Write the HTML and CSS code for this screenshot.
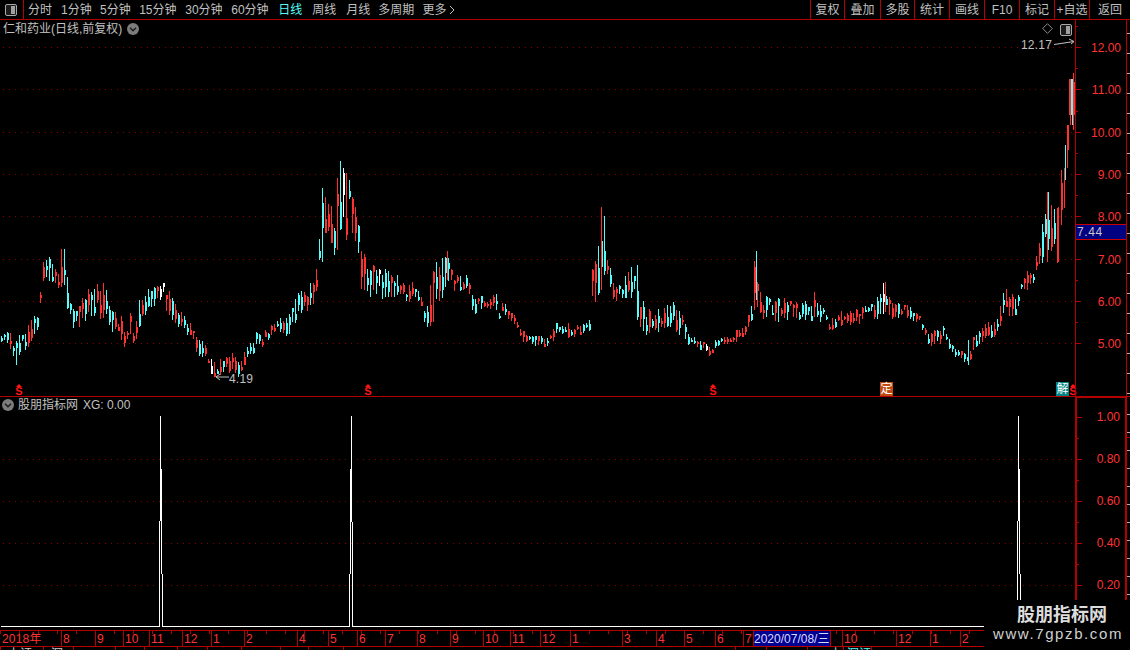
FILE: index.html
```html
<!DOCTYPE html>
<html lang="zh-CN">
<head>
<meta charset="utf-8">
<title>仁和药业</title>
<link rel="stylesheet" href="styles.css">
</head>
<body>
<div class="page">
  <header class="toolbar">
    <div class="tb-icon">
      <svg class="panel-icon" viewBox="0 0 12 12"><rect x="0.5" y="0.5" width="11" height="11" rx="1.5" class="pi-frame"/><rect x="6" y="2" width="4" height="8" class="pi-fill"/></svg>
    </div>
    <nav class="periods">
      <span class="p">分时</span><span class="p p1">1分钟</span><span class="p p1">5分钟</span><span class="p p2">15分钟</span><span class="p p2">30分钟</span><span class="p p3">60分钟</span><span class="p p5 active">日线</span><span class="p p5">周线</span><span class="p p4">月线</span><span class="p p4">多周期</span><span class="p">更多 <svg class="more" viewBox="0 0 6 10"><path d="M1 1l4 4-4 4"/></svg></span>
    </nav>
    <div class="actions">
      <span>复权</span><span>叠加</span><span>多股</span><span>统计</span><span>画线</span><span>F10</span><span>标记</span><span>+自选</span><span>返回</span>
    </div>
  </header>

  <section class="pane pane-main">
    <div class="plot">
      <svg id="kline" class="plot-svg" viewBox="0 20 1075 376"></svg>
      <div class="pane-title">
        <span>仁和药业(日线,前复权)</span>
        <svg class="chev" viewBox="0 0 12 12"><circle cx="6" cy="6" r="6"/><path d="M3 4.8l3 3 3-3"/></svg>
      </div>
      <svg class="diamond" viewBox="0 0 11 11"><path d="M5.5 0.7l4.8 4.8-4.8 4.8-4.8-4.8z"/></svg>
      <svg class="panel-icon corner" viewBox="0 0 12 12"><rect x="0.5" y="0.5" width="11" height="11" rx="1.5" class="pi-frame"/><rect x="6" y="2" width="4" height="8" class="pi-fill"/></svg>
      <span class="note hi">12.17</span>
      <svg class="arrow arrow-hi" viewBox="0 0 22 8"><path d="M1 6.5l20-3M16 1l5 2.5-3 2.5"/></svg>
      <svg class="arrow arrow-lo" viewBox="0 0 14 8"><path d="M1 4h13M5 1L1 4l4 3"/></svg>
      <span class="note lo">4.19</span>
      <i class="mark s1">S</i><i class="mark s2">S</i><i class="mark s3">S</i><i class="mark s4">S</i>
      <b class="flag flag-ding">定</b>
      <b class="flag flag-jie">解</b>
    </div>
    <div class="axis">
      <ul class="ticks ticks-main">
        <li>12.00</li><li>11.00</li><li>10.00</li><li>9.00</li><li>8.00</li><li>7.00</li><li>6.00</li><li>5.00</li>
      </ul>
      <div class="price-tag">7.44</div>
    </div>
    <div class="edge"></div>
  </section>

  <section class="pane pane-sub">
    <div class="plot">
      <svg id="signal" class="plot-svg" viewBox="0 397 1075 233"></svg>
      <div class="pane-title sub-title">
        <svg class="chev" viewBox="0 0 12 12"><circle cx="6" cy="6" r="6"/><path d="M3 4.8l3 3 3-3"/></svg>
        <span>股朋指标网</span><span class="xg">XG: 0.00</span>
      </div>
    </div>
    <div class="axis axis-sub">
      <ul class="ticks ticks-sub">
        <li>1.00</li><li>0.80</li><li>0.60</li><li>0.40</li><li>0.20</li>
      </ul>
    </div>
    <div class="edge edge-sub"></div>
  </section>

  <footer class="timeline">
    <span>2018年</span><span>8</span><span>9</span><span>10</span><span>11</span><span>12</span><span>1</span><span>2</span><span>4</span><span>5</span><span>6</span><span>7</span><span>8</span><span>9</span><span>10</span><span>11</span><span>12</span><span>1</span><span>3</span><span>4</span><span>5</span><span>6</span><span>7</span><span class="cursor-date">2020/07/08/三</span><span></span><span>10</span><span>12</span><span>1</span><span>2</span>
  </footer>
  <div class="status">
    <span>上证</span><span>深</span><span></span><span></span><span></span><span></span><span></span><span></span><span></span><span></span><span></span><span></span><span></span><span class="status-w">上</span><span class="status-c">深证</span><span></span>
  </div>

  <div class="watermark">
    <strong>股朋指标网</strong>
    <span>www.7gpzb.com</span>
  </div>
</div>
<script src="chart.js"></script>
</body>
</html>
```

FILE: styles.css
```css
* { box-sizing: border-box; }
html, body { margin: 0; padding: 0; background: #000; }
body {
  width: 1130px;
  height: 650px;
  overflow: hidden;
  color: #c0c0c0;
  font-family: "Liberation Sans", "Noto Sans CJK SC", sans-serif;
  font-size: 12px;
  line-height: 1;
}
ul { list-style: none; margin: 0; padding: 0; }
i, b { font-style: normal; font-weight: normal; }

.page { position: relative; width: 1130px; height: 650px; display: flex; flex-direction: column; }

/* toolbar */
.toolbar { height: 20px; flex: none; display: flex; align-items: stretch; border-bottom: 1px solid #b40000; }
.tb-icon { width: 24px; flex: none; border-right: 1px solid #b40000; display: flex; align-items: center; justify-content: center; padding-right: 1px; }
.panel-icon { width: 12px; height: 12px; display: block; }
.pi-frame { fill: #1c1c1c; stroke: #a8a8a8; stroke-width: 1; }
.pi-fill { fill: #a0a0a0; }
.periods { flex: 1; display: flex; align-items: center; padding-left: 4px; white-space: nowrap; }
.p { display: flex; align-items: center; margin-right: 9px; }
.p1 { margin-right: 8.4px; }
.p2 { margin-right: 8.7px; }
.p3 { margin-right: 9.7px; }
.p4 { margin-right: 8px; }
.p5 { margin-right: 10px; }
.active { color: #54fcfc; }
.more { width: 6px; height: 10px; margin-left: 3px; }
.more path { fill: none; stroke: #c0c0c0; stroke-width: 1; }
.actions { display: grid; grid-template-columns: 34px 36px 34px 35px 35px 35px 35px 35px 41px; flex: none; width: 320px; }
.actions span { border-left: 1px solid #b40000; display: flex; align-items: center; justify-content: center; white-space: nowrap; }

/* panes */
.pane { display: flex; flex: none; }
.pane-main { height: 377px; border-bottom: 1px solid #b40000; }
.pane-sub { height: 233px; }
.plot { position: relative; width: 1075px; flex: none; }
.plot-svg { position: absolute; left: 0; top: 0; width: 100%; height: 100%; display: block; }

.pane-title { position: absolute; left: 3px; top: 2px; display: flex; align-items: center; gap: 5px; height: 14px; white-space: nowrap; }
.sub-title { left: 2px; top: 1px; gap: 4px; }
.xg { margin-left: 1px; }
.chev { width: 12px; height: 12px; flex: none; }
.chev circle { fill: #7c7c7c; }
.chev path { fill: none; stroke: #1a1a1a; stroke-width: 1.4; }

.diamond { position: absolute; left: 1042px; top: 3px; width: 11px; height: 11px; }
.diamond path { fill: none; stroke: #8c8c8c; stroke-width: 1; }
.corner { position: absolute; left: 1060px; top: 4px; }

.note { position: absolute; color: #c0c0c0; letter-spacing: 0.2px; white-space: nowrap; }
.note.hi { left: 1021px; top: 19px; }
.note.lo { left: 229px; top: 353px; }
.arrow { position: absolute; fill: none; stroke: #c0c0c0; stroke-width: 1; }
.arrow-hi { left: 1053px; top: 18px; width: 22px; height: 8px; }
.arrow-lo { left: 215px; top: 353px; width: 14px; height: 8px; }

.mark { position: absolute; top: 364px; width: 8px; height: 12px; color: #ff1414; font: bold 11px/9px "Liberation Sans", sans-serif; text-align: center; padding-top: 3px; }
.mark::before { content: ""; position: absolute; left: 1px; top: 0; border: 3px solid transparent; border-top: 0; border-bottom: 3px solid #ff1414; }
.s1 { left: 15px; } .s2 { left: 364px; } .s3 { left: 709px; } .s4 { left: 1069px; }

.flag { position: absolute; top: 362px; width: 13px; height: 14px; color: #fff; font-size: 12px; line-height: 14px; text-align: center; }
.flag-ding { left: 880px; background: #c04a10; }
.flag-jie { left: 1056px; background: #008484; }

/* axes */
.axis { position: relative; width: 52px; flex: none; border-left: 1px solid #b40000; border-right: 1px solid #b40000; color: #ff3232; }
.axis-sub { border-width: 1px 2px 0 2px; border-style: solid; border-color: #b40000; }
.ticks-main { padding-top: 6px; }
.ticks li {
  height: 42.3px;
  display: flex;
  align-items: center;
  justify-content: flex-end;
  padding: 2px 5px 0 0;
  position: relative;
  background: linear-gradient(#b40000, #b40000) left top / 2px 1px no-repeat;
}
.ticks li::before { content: ""; position: absolute; left: 0; top: 50%; width: 5px; height: 1px; background: #b40000; }
.ticks-sub { margin-top: -2px; }
.ticks-sub li { height: 42px; padding: 0 5px 0 0; }
.price-tag {
  position: absolute; left: 0; right: 0; top: 204px; height: 16px;
  background: #000080; color: #c8c8c8;
  border-top: 1px solid #c80000; border-bottom: 1px solid #c80000;
  padding-left: 1px; line-height: 14px; letter-spacing: 0.6px;
}
.edge { flex: 1; background: repeating-linear-gradient(#000 0, #000 13px, #b0b0b0 13px, #b0b0b0 14px, #000 14px, #000 20px); }
.edge-sub { background: linear-gradient(#b40000, #b40000) 0 40px / 100% 1px no-repeat, repeating-linear-gradient(#000 0, #000 17px, #b0b0b0 17px, #b0b0b0 18px); }

/* time axis */
.timeline {
  flex: none; height: 17px;
  display: grid;
  grid-template-columns: 61px 34px 28px 26px 33px 29px 33px 53px 31px 29px 28px 32px 33px 33px 27px 30px 30px 52px 34px 28px 31px 28px 10px 77px 12px 54px 34px 30px 1fr;
  border-top: 1px solid #b40000; border-bottom: 1px solid #b40000;
  background: repeating-linear-gradient(90deg, #b40000 0, #b40000 1px, transparent 1px, transparent 19px) 0 0 / 100% 3px no-repeat;
  color: #ff3232;
}
.timeline span { border-left: 1px solid #b40000; padding: 2px 0 0 1px; overflow: hidden; white-space: nowrap; letter-spacing: 0.2px; }
.timeline span:first-child { border-left: 0; padding-left: 2px; }
.timeline .cursor-date { background: #000090; color: #d8d8ff; padding: 2px 0 0 0; letter-spacing: 0; }

.status {
  flex: none; height: 3px; overflow: hidden;
  display: grid;
  grid-template-columns: 43px 30px 42px 29px 33px 30px 34px 39px 28px 35px 392px 31px 41px 36px 28px 1fr;
  color: #d0d0d0;
}
.status span { border-left: 1px solid #b40000; padding: 1px 0 0 7px; white-space: nowrap; height: 14px; overflow: hidden; }
.status .status-w { padding-left: 22px; }
.status .status-c { color: #54fcfc; padding-left: 3px; }

/* watermark */
.watermark {
  position: absolute; right: 0; bottom: 0;
  width: 146px; height: 50px;
  background: #000;
  display: flex; flex-direction: column; align-items: center;
  padding-top: 3px; gap: 1px;
  color: #dcdcdc;
}
.watermark strong { font: bold 18px/21px "Noto Sans CJK SC", sans-serif; margin-left: 10px; }
.watermark span { font: normal 15px/18px "Liberation Sans", sans-serif; letter-spacing: 1.6px; color: #d0d0d0; margin-left: 2px; }
```

FILE: chart.js
```js
(function () {
  var NS = 'http://www.w3.org/2000/svg';
  var GRID = '#8c0000', RED = '#ff3232', CYAN = '#54fcfc', WHITE = '#ffffff';

  function add(svg, tag, attrs) {
    var el = document.createElementNS(NS, tag);
    for (var k in attrs) el.setAttribute(k, attrs[k]);
    svg.appendChild(el);
    return el;
  }
  function grid(svg, ys, w) {
    ys.forEach(function (y) {
      add(svg, 'line', { x1: 3, x2: w, y1: y + 0.5, y2: y + 0.5, stroke: GRID, 'stroke-width': 1, 'stroke-dasharray': '1 5' });
    });
  }

  /* silhouette of the price series: x, highest y, lowest y */
  var env = [
    [0,330,345],[8,330,352],[16,340,370],[22,335,355],[30,322,345],[38,315,335],[41,290,305],[43,257,285],[48,258,285],[56,255,290],[64,249,290],
    [70,288,325],[80,305,330],[90,285,320],[104,280,318],[112,305,330],[125,320,347],[135,310,345],[142,295,320],[150,290,310],[163,279,305],
    [175,300,325],[185,310,330],[195,332,350],[205,342,358],[212,360,378],[225,358,375],[232,352,372],[240,360,378],[250,342,355],[262,325,350],
    [275,320,335],[290,310,335],[300,290,315],[315,280,305],[318,260,295],[321,190,265],[330,195,262],[335,195,262],[342,161,250],[350,175,230],[357,210,250],
    [360,235,290],[368,265,295],[385,270,300],[395,275,305],[405,275,305],[420,290,300],[426,310,330],[435,260,320],[447,251,285],[455,275,295],
    [465,268,290],[475,295,315],[490,295,312],[500,297,320],[515,315,325],[522,330,342],[535,335,345],[548,338,350],[560,320,335],[575,325,340],
    [590,318,330],[592,270,305],[598,255,300],[601,207,290],[606,255,300],[615,275,300],[630,265,300],[638,265,320],[645,305,338],[655,312,335],
    [672,298,330],[682,305,335],[690,335,345],[710,345,355],[725,335,345],[745,325,340],[752,300,320],[756,251,310],[762,295,320],[780,295,320],
    [800,305,320],[815,293,320],[830,315,330],[850,310,325],[870,305,320],[885,282,315],[895,305,320],[905,303,320],[920,315,322],[928,330,345],
    [945,328,345],[955,348,358],[968,355,365],[975,335,350],[985,325,340],[998,320,335],[1005,285,315],[1015,295,315],[1022,280,300],[1030,270,290],
    [1036,255,280],[1040,240,265],[1048,192,262],[1053,195,250],[1058,205,265]
  ];
  function at(x) {
    for (var i = 1; i < env.length; i++) {
      if (x <= env[i][0]) {
        var a = env[i - 1], b = env[i], t = (x - a[0]) / (b[0] - a[0]);
        return [a[1] + (b[1] - a[1]) * t, a[2] + (b[2] - a[2]) * t];
      }
    }
    return [env[env.length - 1][1], env[env.length - 1][2]];
  }
  var seed = 20200708;
  function rnd() {
    seed = (seed * 1664525 + 1013904223) % 4294967296;
    return seed / 4294967296;
  }

  var k = document.getElementById('kline');
  grid(k, [47, 89, 132, 174, 216, 259, 301, 343], 1075);
  for (var x = 1; x < 1058; x += 3) {
    var e = at(x + 1), span = e[1] - e[0];
    /* each session covers a random slice of the local envelope; quiet sessions
       are short, which leaves the black gaps between the thin bars. */
    var share = rnd() < 0.25 ? 0.25 + rnd() * 0.2 : 0.5 + rnd() * 0.5;
    var wobble = (rnd() - 0.5) * Math.min(6, span * 0.3);
    var room = span * (1 - share);
    var hi = e[0] + room * rnd() + wobble;
    var lo = hi + Math.max(4, span * share);
    var range = lo - hi;
    var bodyLen = Math.max(2, range * (0.2 + rnd() * 0.45));
    var bodyTop = hi + (range - bodyLen) * rnd();
    var r = rnd();
    var color = r < 0.49 ? RED : (r < 0.985 ? CYAN : WHITE);
    add(k, 'rect', { x: x, y: Math.round(hi), width: 1, height: Math.round(range), fill: color });
    add(k, 'rect', { x: x, y: Math.round(bodyTop), width: 2, height: Math.round(bodyLen), fill: color });
  }
  /* the session extremes that stand out of the silhouette */
  [[340,161,205,CYAN],[337,180,250,RED],[601,207,290,RED],[604,216,262,CYAN],[756,251,300,CYAN],[447,251,280,RED],[885,282,312,RED],[64,249,285,CYAN],
   [322,188,262,CYAN],[1047,192,262,RED],[1048,192,250,CYAN],[968,340,365,CYAN],
   [1058,207,262,RED],[1061,170,225,RED],[1062,183,210,RED],[1064,168,208,RED],[1065,145,180,CYAN],[1067,125,168,RED],[1068,125,150,RED],
   [1069,79,115,RED],[1070,79,125,RED],[1071,79,115,CYAN],[1072,79,125,CYAN],[1073,73,130,RED],[1074,82,115,RED]
  ].forEach(function (b) {
    add(k, 'rect', { x: b[0], y: b[1], width: 1, height: b[2] - b[1], fill: b[3] });
  });

  var s = document.getElementById('signal');
  grid(s, [459, 501, 543, 585], 1075);
  function bar(x, y, w, h) { add(s, 'rect', { x: x, y: y, width: w, height: h, fill: WHITE }); }
  function spike(p) {
    bar(p, 416, 1, 53);
    bar(p, 469, 2, 52);
    bar(p - 1, 521, 1, 105);
    bar(p + 1, 521, 1, 53);
    bar(p + 2, 574, 1, 53);
  }
  spike(160);
  spike(1018);
  /* second signal leans the other way */
  bar(351, 416, 1, 53);
  bar(350, 469, 2, 53);
  bar(350, 522, 1, 52);
  bar(352, 522, 1, 105);
  bar(349, 574, 1, 53);
  bar(1, 626, 159, 1);
  bar(162, 626, 188, 1);
  bar(352, 626, 666, 1);
})();
```
